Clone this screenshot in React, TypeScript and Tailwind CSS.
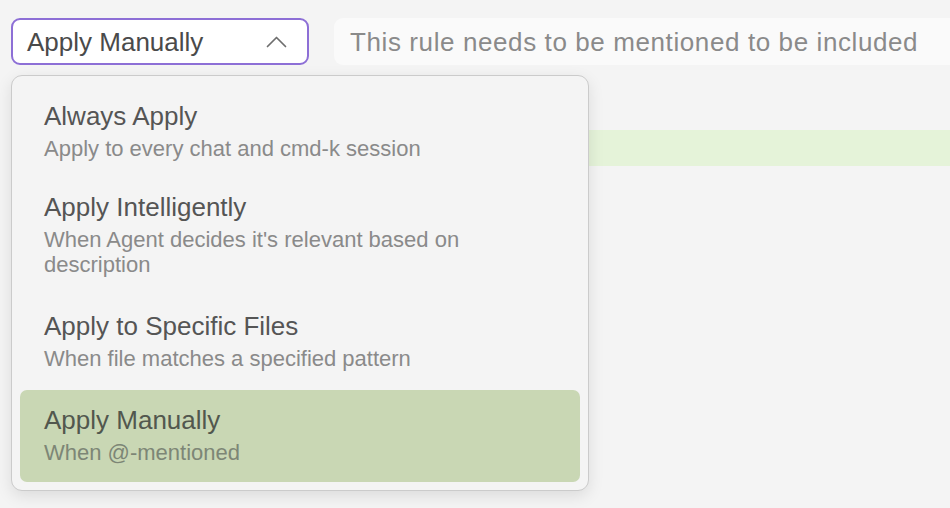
import React from "react";

const items = [
  { title: "Always Apply", sub: "Apply to every chat and cmd-k session", first: true },
  { title: "Apply Intelligently", sub: "When Agent decides it's relevant based on description" },
  { title: "Apply to Specific Files", sub: "When file matches a specified pattern" },
  { title: "Apply Manually", sub: "When @-mentioned", selected: true },
];

export default function App() {
  return (
    <div className="relative w-[950px] h-[508px] overflow-hidden bg-[#f4f4f4] font-['Liberation_Sans',Arial,Helvetica,sans-serif]">
      <div className="flex gap-[25px] pl-[11px] pt-[18px]">
        <div className="flex h-[47px] w-[298px] items-center justify-between rounded-[9px] border-2 border-[#8d6fd6] bg-white pl-[14px] pr-[20px]">
          <span className="text-[26px] leading-[30px] text-[#4a4a4a]">Apply Manually</span>
          <svg width="21" height="13" viewBox="0 0 21 13" fill="none">
            <polyline points="1.5,11.5 10.5,2.5 19.5,11.5" stroke="#6e6e6e" strokeWidth="1.7" strokeLinecap="round" strokeLinejoin="round" />
          </svg>
        </div>
        <div className="flex h-[47px] flex-1 items-center rounded-l-[9px] bg-[#fafafa] pl-[16px]">
          <span className="text-[26px] leading-[30px] tracking-[0.6px] text-[#8a8a8a]">
            This rule needs to be mentioned to be included
          </span>
        </div>
      </div>

      <div className="ml-[11px] mt-[65px] h-[36px] bg-[#e5f3d9]" />

      <div className="absolute left-[11px] top-[75px] w-[578px] rounded-[11px] border border-[#cbcbcb] bg-[#f4f4f4] px-[8px] pb-[8px] pt-[7px] shadow-[0_5px_16px_rgba(0,0,0,0.10)]">
        <div className="flex flex-col gap-[2px]">
          {items.map((it) => (
            <div
              key={it.title}
              className={
                it.selected
                  ? "rounded-[7px] bg-[#c9d7b4] pb-[17px] pl-[24px] pr-[16px] pt-[15px]"
                  : it.first
                  ? "rounded-[7px] pb-[14px] pl-[24px] pr-[16px] pt-[18px]"
                  : "rounded-[7px] pb-[17px] pl-[24px] pr-[16px] pt-[15px]"
              }
            >
              <div className={it.selected ? "text-[26px] leading-[30px] text-[#52574e]" : "text-[26px] leading-[30px] text-[#555555]"}>
                {it.title}
              </div>
              <div
                className={
                  it.selected
                    ? "mt-[5px] max-w-[460px] text-[22px] leading-[25px] text-[#7d8676]"
                    : "mt-[5px] max-w-[460px] text-[22px] leading-[25px] text-[#8a8a8a]"
                }
              >
                {it.sub}
              </div>
            </div>
          ))}
        </div>
      </div>
    </div>
  );
}
